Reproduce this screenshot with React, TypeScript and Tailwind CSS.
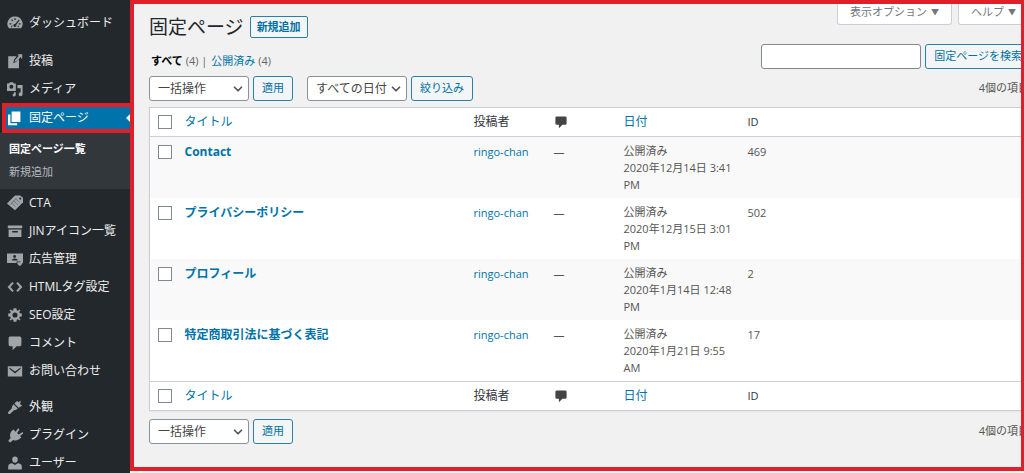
import React, { useState } from 'react';
import { ChevronDown } from 'lucide-react';

const icons: Record<string, React.ReactNode> = {
  dashboard: (
    <path
      fillRule="evenodd"
      d="M10 2a9 9 0 0 0-7.600 14.500h15.200A9 9 0 0 0 10 2zM9.2 4h1.600V6.200H9.200zM5.200 6.200l1.100-.9 1.400 1.600-1.100.9zM14.800 5.700l1 1-4.300 5.600a1.800 1.800 0 1 1-1.300-1zM3.200 10.400h2.300v1.500H3.200zM14.600 10.400h2.300v1.500h-2.300zM5 15.200l1-2.200h1l-.8 2.200zM13.800 15.200l-.8-2.200h1l1 2.200z"
    />
  ),
  post: (
    <path d="M1.500 4h10.500l-3.200 4.400-.9 4.300 3.800-1.700L15 7.500V19H1.500zM16.200 2l2.300 1.800-6.800 6.600-2.200.6.4-2zM13.500 1.500H19V7h-1.500V3h-4z" />
  ),
  media: (
    <>
      <path fillRule="evenodd" d="M0 3h2.500l1-1.500h4L8.500 3H11v9.500H0zM5.500 4.800a2.500 2.500 0 1 0 0 5 2.500 2.500 0 0 0 0-5z" />
      <path d="M13 5h6.500v11.500a2.500 2.500 0 1 1-2.500-2.500V9h-4zM8.500 14H11v3.500a2 2 0 1 1-2.500-2z" />
    </>
  ),
  page: <path d="M7 2h11v13H7zM2.500 5.500h3v11H14V19H2.500z" />,
  cta: (
    <>
      <path d="M0 10.500L10 .5h6.500l3.500 3V9L10 19z" />
      <path stroke="#23282d" strokeWidth="1" fill="none" d="M5.500 9.500l5 5M8 7l5 5M10.500 4.500l5 5M4 12l8-8" opacity=".5" />
      <circle cx="16.500" cy="4.500" r="1.300" fill="#23282d" />
    </>
  ),
  archive: <path fillRule="evenodd" d="M1 3h18v3.500H1zM2 8h16v9.500H2zM6.500 10v2h7v-2z" />,
  ads: (
    <>
      <path fillRule="evenodd" d="M0 3h20v12h-3v-2h-5v2H0zM9.500 5a1.800 1.800 0 1 0 0 3.600 1.800 1.800 0 0 0 0-3.600zM6 12h7.500c0-3.500-7.500-3.500-7.500 0z" />
      <path d="M13 14h6v2l-2 2.500h-2L13 16z" />
    </>
  ),
  code: <path fill="none" stroke="currentColor" strokeWidth="2.600" d="M7.500 4.500L2.500 10l5 5.500M12.500 4.500l5 5.500-5 5.500" />,
  gear: (
    <path
      fillRule="evenodd"
      d="M18.500 12l-2.700.2c-.2.600-.3 1-.6 1.500l1.700 2-1.300 1.300-2-1.700c-.5.300-1 .5-1.500.6L11.800 18.500H8.200l-.3-2.600c-.6-.2-1-.3-1.500-.6l-2 1.700-1.300-1.300 1.700-2c-.3-.5-.5-1-.6-1.500L1.500 12V8l2.700-.2c.2-.6.300-1 .6-1.500l-1.700-2L4.400 3l2 1.700c.5-.3 1-.5 1.500-.6l.3-2.600h3.600l.3 2.600c.6.200 1 .3 1.500.6l2-1.700 1.300 1.300-1.700 2c.3.500.5 1 .6 1.500l2.700.2zM10 6.800a3.200 3.200 0 1 0 0 6.400 3.200 3.200 0 0 0 0-6.400z"
    />
  ),
  comment: <path d="M4 2h12a2 2 0 0 1 2 2v8a2 2 0 0 1-2 2h-4l-5 5v-5H4a2 2 0 0 1-2-2V4a2 2 0 0 1 2-2z" />,
  mail: <path fillRule="evenodd" d="M1 4h18v13H1zM3 5.500v1.700l7 5.800 7-5.800V5.500l-7 5z" />,
  appearance: (
    <path d="M14.500 10.800l-5.300-5.300L12.500 2.500l1.800 1.600 2.200-1.600 1 1-1.500 2.300L19 8.500zM13.500 11.800l-2 1.700c-1.200.9-2.700.2-3.500 1.100L4 18.500c-1.500 1.200-3.500-.8-2.500-2.400l4-4c1-.9.200-2.300 1.100-3.500l1.600-2z" />
  ),
  plugin: (
    <path d="M8 3l2.800 2.800 2.700-3.600c1-1.100 2.500.2 1.700 1.400L12.600 7.500l2 2 3.900-2.700c1.200-.8 2.400.8 1.300 1.700L16.300 11.200 18 13l-1.500 1.200c-2.600 2.500-6 3.300-8.700 1.900L4 19.500 1.500 17.500 4.500 13.500C3 10.500 4 7 6.500 4.500z" />
  ),
  user: <path d="M10 9.800c-2.400 0-3.500-2-3.500-4.200S7.800 1.800 10 1.800s3.500 1.600 3.500 3.800S12.400 9.800 10 9.800zM1.500 18v-4c0-2.500 2.500-3.500 5-3.800L10 12.500l3.500-2.300c2.500.3 5 1.300 5 3.800v4z" />,
};

function Icon({ name, className }: { name: string; className: string }) {
  return (
    <svg viewBox="0 0 20 20" fill="currentColor" aria-hidden="true" className={`shrink-0 ${className}`}>
      {icons[name]}
    </svg>
  );
}

function MenuItem({ icon, label }: { icon: string; label: string }) {
  return (
    <li>
      <a href="#" className="flex h-7 items-center gap-1.5 pl-[7px] text-xs text-[#eeeeee] hover:text-[#00b9eb]">
        <Icon name={icon} className="size-4 text-[#a0a5aa]" />
        {label}
      </a>
    </li>
  );
}

const topItems = [
  { icon: 'post', label: '投稿' },
  { icon: 'media', label: 'メディア' },
];

const middleItems = [
  { icon: 'cta', label: 'CTA' },
  { icon: 'archive', label: 'JINアイコン一覧' },
  { icon: 'ads', label: '広告管理' },
  { icon: 'code', label: 'HTMLタグ設定' },
  { icon: 'gear', label: 'SEO設定' },
  { icon: 'comment', label: 'コメント' },
  { icon: 'mail', label: 'お問い合わせ' },
];

const bottomItems = [
  { icon: 'appearance', label: '外観' },
  { icon: 'plugin', label: 'プラグイン' },
  { icon: 'user', label: 'ユーザー' },
];

function Sidebar() {
  return (
    <nav className="w-[130px] shrink-0 overflow-hidden bg-[#23282d] pt-[9px]">
      <ul>
        <MenuItem icon="dashboard" label="ダッシュボード" />
      </ul>
      <ul className="mt-2.5">
        {topItems.map((item) => (
          <MenuItem key={item.label} {...item} />
        ))}
        <li>
          <a
            href="#"
            className="ml-0.5 flex h-[30px] items-center gap-[7px] border-4 border-r-0 border-[#e01f2b] bg-[#0073aa] text-xs text-white"
          >
            <Icon name="page" className="size-4" />
            <span className="flex-1">固定ページ</span>
            <span className="border-y-4 border-r-4 border-y-transparent border-r-[#f1f1f1]" />
          </a>
          <ul className="flex h-14 flex-col bg-[#32373c] pl-[9px] pt-1 text-[11px] leading-[23px]">
            <li>
              <a href="#" className="font-bold text-white">固定ページ一覧</a>
            </li>
            <li>
              <a href="#" className="text-[#b4b9be]">新規追加</a>
            </li>
          </ul>
        </li>
        {middleItems.map((item) => (
          <MenuItem key={item.label} {...item} />
        ))}
      </ul>
      <ul className="mt-2">
        {bottomItems.map((item) => (
          <MenuItem key={item.label} {...item} />
        ))}
      </ul>
    </nav>
  );
}

function Button({ children }: { children: React.ReactNode }) {
  return (
    <button
      type="button"
      className="h-[25px] shrink-0 cursor-pointer rounded-[3px] border border-[#2782a8] bg-[#f3f5f6] px-2 text-[11px] whitespace-nowrap text-[#0071a1]"
    >
      {children}
    </button>
  );
}

function Select({ label, option }: { label: string; option: string }) {
  return (
    <div className="relative w-[100px]">
      <select
        aria-label={label}
        className="block h-[25px] w-full appearance-none rounded-[3px] border border-[#8c9196] bg-white pl-2 text-xs text-[#444]"
      >
        <option>{option}</option>
      </select>
      <ChevronDown size={14} strokeWidth={3} className="pointer-events-none absolute top-1.5 right-1 text-[#555]" />
    </div>
  );
}

const pages = [
  { title: 'Contact', date: '2020年12月14日 3:41 PM', id: 469 },
  { title: 'プライバシーポリシー', date: '2020年12月15日 3:01 PM', id: 502 },
  { title: 'プロフィール', date: '2020年1月14日 12:48 PM', id: 2 },
  { title: '特定商取引法に基づく表記', date: '2020年1月21日 9:55 AM', id: 17 },
];

const checkboxClass =
  'block size-3.5 appearance-none border border-[#7e8993] bg-white checked:bg-[#0073aa]';

function HeadingRow({ checked, onToggle }: { checked: boolean; onToggle: () => void }) {
  return (
    <tr className="h-[29px] text-xs text-[#32373c]">
      <th className="pl-2">
        <input type="checkbox" aria-label="すべて選択" checked={checked} onChange={onToggle} className={checkboxClass} />
      </th>
      <th className="px-2 font-normal">
        <a href="#" className="text-[#0073aa]">タイトル</a>
      </th>
      <th className="px-2 font-normal">投稿者</th>
      <th className="px-2" aria-label="コメント">
        <Icon name="comment" className="size-3.5 text-[#444]" />
      </th>
      <th className="px-2 font-normal">
        <a href="#" className="text-[#0073aa]">日付</a>
      </th>
      <th className="px-2 text-[11px] font-normal">ID</th>
    </tr>
  );
}

function PagesTable() {
  const [selected, setSelected] = useState<number[]>([]);
  const allSelected = selected.length === pages.length;

  const toggleAll = () => setSelected(allSelected ? [] : pages.map((p) => p.id));
  const toggle = (id: number) =>
    setSelected(selected.includes(id) ? selected.filter((s) => s !== id) : [...selected, id]);

  return (
    <table className="mt-1.5 w-full table-fixed border border-[#ccd0d4] bg-white text-left shadow-xs">
      <colgroup>
        <col className="w-[27px]" />
        <col />
        <col className="w-20" />
        <col className="w-[70px]" />
        <col className="w-[124px]" />
        <col className="w-[291px]" />
      </colgroup>
      <thead className="border-b border-[#ccd0d4]">
        <HeadingRow checked={allSelected} onToggle={toggleAll} />
      </thead>
      <tbody className="text-[11px] leading-[17px] text-[#555]">
        {pages.map((page) => (
          <tr key={page.id} className="align-top odd:bg-[#f9f9f9]">
            <td className="pt-2 pl-2">
              <input
                type="checkbox"
                aria-label={`${page.title}を選択`}
                checked={selected.includes(page.id)}
                onChange={() => toggle(page.id)}
                className={checkboxClass}
              />
            </td>
            <td className="px-2 pt-1.5">
              <a href="#" className="text-xs leading-[17px] font-bold text-[#0073aa]">{page.title}</a>
            </td>
            <td className="px-2 pt-1.5">
              <a href="#" className="text-[#0073aa]">ringo-chan</a>
            </td>
            <td className="px-2 pt-1.5">—</td>
            <td className="py-[5px] pr-0 pl-2">
              公開済み
              <br />
              {page.date}
            </td>
            <td className="px-2 pt-1.5">{page.id}</td>
          </tr>
        ))}
      </tbody>
      <tfoot className="border-t border-[#ccd0d4]">
        <HeadingRow checked={allSelected} onToggle={toggleAll} />
      </tfoot>
    </table>
  );
}

function ScreenTab({ label }: { label: string }) {
  return (
    <button
      type="button"
      className="flex h-[21px] cursor-pointer items-center gap-1 rounded-b-[3px] border border-t-0 border-[#ccd0d4] bg-white px-3 pb-1 text-[11px] text-[#72777c]"
    >
      {label}
      <span className="text-[8px]">▼</span>
    </button>
  );
}

export default function App() {
  return (
    <div className="flex h-screen overflow-hidden bg-[#fdf3f0] font-['Open_Sans','Noto_Sans_CJK_JP',sans-serif]">
      <Sidebar />
      <main className="mb-0.5 min-w-0 flex-1 overflow-hidden border-4 border-r-[3px] border-[#e01f2b] bg-[#f1f1f1] pl-[15px]">
        <div className="-mr-2.5">
          <div className="flex h-9 items-start justify-between">
            <div className="flex items-center gap-1.5 pt-[9px]">
              <h1 className="text-[19px] leading-7 text-[#23282d]">固定ページ</h1>
              <button
                type="button"
                className="h-[22px] cursor-pointer rounded-[2px] border border-[#2782a8] bg-[#f3f5f6] px-1.5 text-[11px] font-bold text-[#0071a1]"
              >
                新規追加
              </button>
            </div>
            <div className="mr-0.5 flex gap-1.5">
              <ScreenTab label="表示オプション" />
              <ScreenTab label="ヘルプ" />
            </div>
          </div>

          <div className="flex items-start justify-between">
            <ul className="flex gap-1 pt-3 pl-0.5 text-[11px] leading-[17px] text-[#666]">
              <li>
                <a href="#" className="font-bold text-black">すべて</a> (4) |
              </li>
              <li>
                <a href="#" className="text-[#0073aa]">公開済み</a> (4)
              </li>
            </ul>
            <form className="flex gap-1 pt-1" onSubmit={(e) => e.preventDefault()}>
              <input
                type="search"
                aria-label="固定ページを検索"
                className="h-[25px] w-40 rounded-[3px] border border-[#7e8993] bg-white px-2 text-xs"
              />
              <Button>固定ページを検索</Button>
            </form>
          </div>

          <div className="mt-[7px] flex items-center gap-1">
            <Select label="一括操作を選択" option="一括操作" />
            <Button>適用</Button>
            <div className="ml-2.5 flex gap-1">
              <Select label="日付で絞り込む" option="すべての日付" />
              <Button>絞り込み</Button>
            </div>
            <span className="mr-0.5 ml-auto text-[11px] text-[#555]">4個の項目</span>
          </div>

          <PagesTable />

          <div className="mt-2 flex items-center gap-1">
            <Select label="一括操作を選択" option="一括操作" />
            <Button>適用</Button>
            <span className="mr-0.5 ml-auto text-[11px] text-[#555]">4個の項目</span>
          </div>
        </div>
      </main>
    </div>
  );
}
